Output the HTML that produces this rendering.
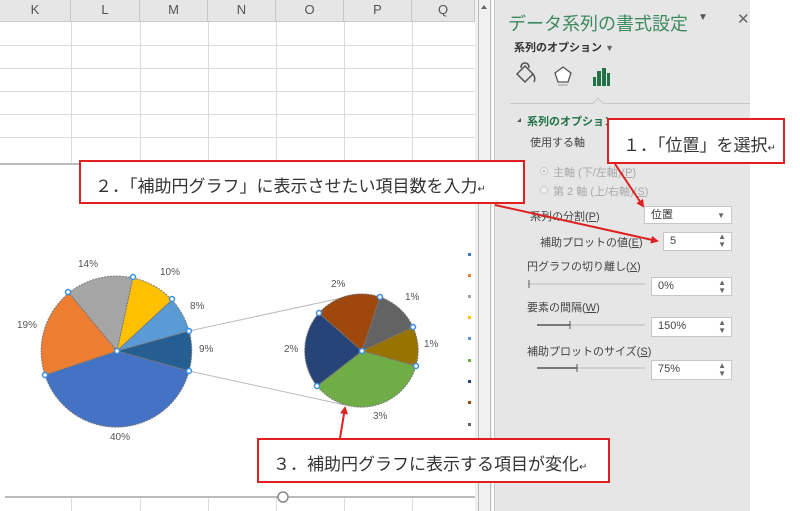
<!DOCTYPE html>
<html><head><meta charset="utf-8"><style>
body{margin:0;width:800px;height:511px;overflow:hidden;background:#fff;font-family:"Liberation Sans","Noto Sans CJK JP",sans-serif;position:relative}
.a{position:absolute;white-space:nowrap}
.hd{position:absolute;top:0;height:22px;background:#e6e6e6;border-right:1px solid #c8c8c8;border-bottom:1px solid #c8c8c8;font-size:13px;color:#555;text-align:center;line-height:20px;box-sizing:border-box}
.lbl{font-size:11px;color:#444}
.box{position:absolute;background:#fff;border:1px solid #c6c6c6;font-size:11px;color:#444;box-sizing:border-box;padding-left:6px;line-height:17px}
.call{position:absolute;background:#fff;border:2px solid #e02020;box-sizing:border-box;font-size:17px;color:#333;font-family:"Liberation Sans","Noto Sans CJK JP",sans-serif;white-space:nowrap}
.pl{font-size:10px;color:#555}
</style></head><body>
<div class="hd" style="left:0;width:71px">K</div>
<div class="hd" style="left:71px;width:69px">L</div>
<div class="hd" style="left:140px;width:68px">M</div>
<div class="hd" style="left:208px;width:68px">N</div>
<div class="hd" style="left:276px;width:68px">O</div>
<div class="hd" style="left:344px;width:68px">P</div>
<div class="hd" style="left:412px;width:63px">Q</div>
<svg class="a" style="left:0;top:0" width="800" height="511">
<g stroke="#dcdcdc" stroke-width="1">
<line x1="0" y1="45.5" x2="475" y2="45.5"/><line x1="0" y1="68.5" x2="475" y2="68.5"/><line x1="0" y1="91.5" x2="475" y2="91.5"/><line x1="0" y1="114.5" x2="475" y2="114.5"/><line x1="0" y1="137.5" x2="475" y2="137.5"/>
<line x1="71.5" y1="22" x2="71.5" y2="163"/><line x1="140.5" y1="22" x2="140.5" y2="163"/><line x1="208.5" y1="22" x2="208.5" y2="163"/><line x1="276.5" y1="22" x2="276.5" y2="163"/><line x1="344.5" y1="22" x2="344.5" y2="163"/><line x1="412.5" y1="22" x2="412.5" y2="163"/>
<line x1="71.5" y1="497" x2="71.5" y2="511"/><line x1="140.5" y1="497" x2="140.5" y2="511"/><line x1="208.5" y1="497" x2="208.5" y2="511"/><line x1="276.5" y1="497" x2="276.5" y2="511"/><line x1="344.5" y1="497" x2="344.5" y2="511"/><line x1="412.5" y1="497" x2="412.5" y2="511"/>
</g>
<line x1="0" y1="164" x2="475" y2="164" stroke="#bbb" stroke-width="2"/>
<line x1="5" y1="497" x2="475" y2="497" stroke="#bbb" stroke-width="2"/>
<circle cx="283" cy="497" r="5" fill="#fff" stroke="#888" stroke-width="1.5"/>
<rect x="475" y="0" width="17" height="511" fill="#f0f0f0"/>
<line x1="478.5" y1="0" x2="478.5" y2="511" stroke="#bbb"/><line x1="490.5" y1="0" x2="490.5" y2="511" stroke="#bbb"/>
<path d="M481 9 L484 5 L487 9Z" fill="#666"/>
<rect x="494" y="0" width="256" height="511" fill="#e6e6e6"/>
<line x1="494.5" y1="0" x2="494.5" y2="511" stroke="#c8c8c8"/>
<line x1="189" y1="331" x2="360" y2="294" stroke="#bbb"/>
<line x1="189" y1="371" x2="345" y2="405" stroke="#bbb"/>
<g stroke="#777" stroke-width="1" stroke-dasharray="2 1">
<path d="M117 351 L189 331 A75 75 0 0 1 189 371Z" fill="#255e91"/>
<path d="M117 351 L189 371 A75 75 0 0 1 45 375Z" fill="#4472c4"/>
<path d="M117 351 L45 375 A75 75 0 0 1 69 293Z" fill="#ed7d31"/>
<path d="M117 351 L69 293 A75 75 0 0 1 133 278Z" fill="#a5a5a5"/>
<path d="M117 351 L133 278 A75 75 0 0 1 172 300Z" fill="#ffc000"/>
<path d="M117 351 L172 300 A75 75 0 0 1 189 331Z" fill="#5b9bd5"/>
<path d="M362 351 L380 297 A57 57 0 0 1 413 327Z" fill="#636363"/>
<path d="M362 351 L413 327 A57 57 0 0 1 416 366Z" fill="#997300"/>
<path d="M362 351 L416 366 A57 57 0 0 1 317 386Z" fill="#70ad47"/>
<path d="M362 351 L317 386 A57 57 0 0 1 319 313Z" fill="#264478"/>
<path d="M362 351 L319 313 A57 57 0 0 1 380 297Z" fill="#9e480e"/>
</g>
<g fill="#fff" stroke="#3a8ee0" stroke-width="1.5">
<circle cx="117" cy="351" r="2.5"/><circle cx="133" cy="277" r="2.5"/><circle cx="68" cy="292" r="2.5"/><circle cx="172" cy="299" r="2.5"/><circle cx="189" cy="331" r="2.5"/><circle cx="189" cy="371" r="2.5"/><circle cx="45" cy="375" r="2.5"/>
<circle cx="362" cy="351" r="2.5"/><circle cx="380" cy="297" r="2.5"/><circle cx="319" cy="313" r="2.5"/><circle cx="413" cy="327" r="2.5"/><circle cx="416" cy="366" r="2.5"/><circle cx="317" cy="386" r="2.5"/>
</g>
<g>
<rect x="468" y="253" width="3" height="3" fill="#4472c4"/><rect x="468" y="274" width="3" height="3" fill="#ed7d31"/><rect x="468" y="295" width="3" height="3" fill="#a5a5a5"/><rect x="468" y="316" width="3" height="3" fill="#ffc000"/><rect x="468" y="337" width="3" height="3" fill="#5b9bd5"/><rect x="468" y="359" width="3" height="3" fill="#70ad47"/><rect x="468" y="380" width="3" height="3" fill="#264478"/><rect x="468" y="401" width="3" height="3" fill="#9e480e"/><rect x="468" y="423" width="3" height="3" fill="#636363"/>
</g>
<path d="M517 74 L525 66 L533 74 L525 82Z M521 68 Q521 63 525 63 Q529 63 529 68" fill="none" stroke="#555" stroke-width="1.5"/>
<path d="M533 74 Q536 78 534 82" fill="none" stroke="#555" stroke-width="1.5"/>
<path d="M563 67 L571 73 L568 82 L558 82 L555 73Z" fill="#fff" stroke="#555" stroke-width="1.3"/>
<line x1="558" y1="85" x2="568" y2="85" stroke="#999"/>
<rect x="593" y="77" width="3" height="9" fill="#217346"/><rect x="597" y="71" width="4" height="15" fill="#217346"/><rect x="602" y="68" width="4" height="18" fill="#217346"/><rect x="607" y="73" width="3" height="13" fill="#217346"/>
<path d="M510 103.5 L593 103.5 L598 98 L603 103.5 L750 103.5" fill="none" stroke="#c8c8c8"/>
<path d="M517 122 L521 118 L521 122Z" fill="#555"/>
<line x1="528" y1="284" x2="645" y2="284" stroke="#bbb"/><line x1="529" y1="280" x2="529" y2="288" stroke="#555"/>
<line x1="537" y1="325" x2="645" y2="325" stroke="#bbb"/><line x1="537" y1="325" x2="570" y2="325" stroke="#555" stroke-width="1.5"/><line x1="570" y1="321" x2="570" y2="329" stroke="#555"/>
<line x1="537" y1="368" x2="645" y2="368" stroke="#bbb"/><line x1="537" y1="368" x2="577" y2="368" stroke="#555" stroke-width="1.5"/><line x1="577" y1="364" x2="577" y2="372" stroke="#555"/>
<circle cx="544" cy="171" r="3.5" fill="#f2f2f2" stroke="#ccc"/><circle cx="544" cy="171" r="1.3" fill="#bbb"/><circle cx="544" cy="190" r="3.5" fill="#f2f2f2" stroke="#ccc"/>
</svg>
<div class="a" style="left:508px;top:10px;font-size:18px;color:#3d8a5f">データ系列の書式設定</div>
<div class="a" style="left:698px;top:12px;font-size:10px;color:#555">▼</div>
<div class="a" style="left:737px;top:10px;font-size:15px;color:#666">✕</div>
<div class="a" style="left:514px;top:39px;font-size:11px;color:#333;font-weight:bold">系列のオプション <span style="font-size:9px;color:#666">▼</span></div>
<div class="a" style="left:527px;top:113px;font-size:11px;color:#217346;font-weight:bold">系列のオプション</div>
<div class="a lbl" style="left:530px;top:134px">使用する軸</div>
<div class="a lbl" style="left:553px;top:164px;color:#aaa">主軸 (下/左軸)(<u>P</u>)</div>
<div class="a lbl" style="left:553px;top:183px;color:#aaa">第 2 軸 (上/右軸)(<u>S</u>)</div>
<div class="a lbl" style="left:530px;top:208px">系列の分割(<u>P</u>)</div>
<div class="a lbl" style="left:540px;top:234px">補助プロットの値(<u>E</u>)</div>
<div class="a lbl" style="left:527px;top:258px">円グラフの切り離し(<u>X</u>)</div>
<div class="a lbl" style="left:527px;top:299px">要素の間隔(<u>W</u>)</div>
<div class="a lbl" style="left:527px;top:343px">補助プロットのサイズ(<u>S</u>)</div>
<div class="box" style="left:644px;top:206px;width:88px;height:18px;color:#333">位置<span style="position:absolute;right:6px;font-size:8px;color:#666">▼</span></div>
<div class="box" style="left:663px;top:232px;width:69px;height:19px">5<span style="position:absolute;right:5px;top:0;font-size:8px;line-height:8px;color:#666">▲<br>▼</span></div>
<div class="box" style="left:651px;top:277px;width:81px;height:19px">0%<span style="position:absolute;right:5px;top:1px;font-size:8px;line-height:8px;color:#666">▲<br>▼</span></div>
<div class="box" style="left:651px;top:317px;width:81px;height:20px">150%<span style="position:absolute;right:5px;top:1px;font-size:8px;line-height:8px;color:#666">▲<br>▼</span></div>
<div class="box" style="left:651px;top:360px;width:81px;height:20px">75%<span style="position:absolute;right:5px;top:1px;font-size:8px;line-height:8px;color:#666">▲<br>▼</span></div>
<div class="a pl" style="left:78px;top:259px">14%</div>
<div class="a pl" style="left:160px;top:267px">10%</div>
<div class="a pl" style="left:190px;top:301px">8%</div>
<div class="a pl" style="left:17px;top:320px">19%</div>
<div class="a pl" style="left:199px;top:344px">9%</div>
<div class="a pl" style="left:110px;top:432px">40%</div>
<div class="a pl" style="left:331px;top:279px">2%</div>
<div class="a pl" style="left:405px;top:292px">1%</div>
<div class="a pl" style="left:424px;top:339px">1%</div>
<div class="a pl" style="left:284px;top:344px">2%</div>
<div class="a pl" style="left:373px;top:411px">3%</div>
<div class="call" style="left:79px;top:160px;width:446px;height:44px;padding:10px 0 0 14px">２．「補助円グラフ」に表示させたい項目数を入力<span style="font-size:10px">↵</span></div>
<div class="call" style="left:607px;top:118px;width:178px;height:46px;padding:11px 0 0 14px">１．「位置」を選択<span style="font-size:10px">↵</span></div>
<div class="call" style="left:257px;top:438px;width:353px;height:45px;padding:10px 0 0 14px">３．補助円グラフに表示する項目が変化<span style="font-size:10px">↵</span></div>
<svg class="a" style="left:0;top:0" width="800" height="511">
<defs><marker id="ar" markerWidth="8" markerHeight="8" refX="6" refY="4" orient="auto" markerUnits="userSpaceOnUse"><path d="M0 0 L8 4 L0 8Z" fill="#e02020"/></marker></defs>
<g stroke="#e02020" stroke-width="2" fill="none" marker-end="url(#ar)">
<line x1="615" y1="164" x2="643" y2="206"/>
<line x1="495" y1="205" x2="657" y2="241"/>
<line x1="340" y1="438" x2="345" y2="408"/>
</g>
</svg>
</body></html>
